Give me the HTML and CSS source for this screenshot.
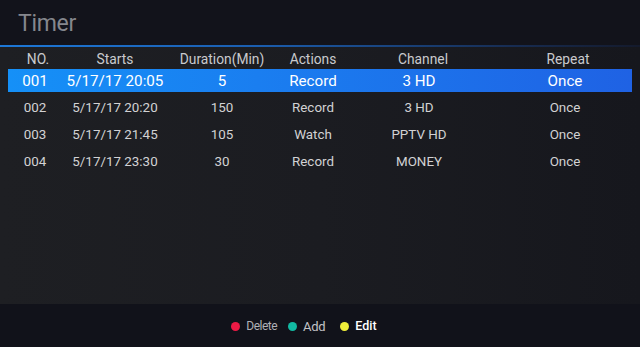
FILE: index.html
```html
<!DOCTYPE html>
<html>
<head>
<meta charset="utf-8">
<link rel="stylesheet" href="styles.css">
</head>
<body>
<div class="screen">
  <header class="top">
    <h1 class="title">Timer</h1>
  </header>
  <div class="rule"></div>
  <main class="panel">
    <div class="row head">
      <span class="c no">NO.</span>
      <span class="c st">Starts</span>
      <span class="c du">Duration(Min)</span>
      <span class="c ac">Actions</span>
      <span class="c ch">Channel</span>
      <span class="c re">Repeat</span>
    </div>
    <div class="row sel">
      <span class="c no">001</span>
      <span class="c st">5/17/17 20:05</span>
      <span class="c du">5</span>
      <span class="c ac">Record</span>
      <span class="c ch">3 HD</span>
      <span class="c re">Once</span>
    </div>
    <div class="row">
      <span class="c no">002</span>
      <span class="c st">5/17/17 20:20</span>
      <span class="c du">150</span>
      <span class="c ac">Record</span>
      <span class="c ch">3 HD</span>
      <span class="c re">Once</span>
    </div>
    <div class="row">
      <span class="c no">003</span>
      <span class="c st">5/17/17 21:45</span>
      <span class="c du">105</span>
      <span class="c ac">Watch</span>
      <span class="c ch">PPTV HD</span>
      <span class="c re">Once</span>
    </div>
    <div class="row">
      <span class="c no">004</span>
      <span class="c st">5/17/17 23:30</span>
      <span class="c du">30</span>
      <span class="c ac">Record</span>
      <span class="c ch">MONEY</span>
      <span class="c re">Once</span>
    </div>
  </main>
  <footer class="foot">
    <span class="key k1"><i class="dot red"></i><span class="lbl del">Delete</span></span>
    <span class="key k2"><i class="dot teal"></i><span class="lbl add">Add</span></span>
    <span class="key k3"><i class="dot yel"></i><span class="lbl edit">Edit</span></span>
  </footer>
</div>
</body>
</html>
```
FILE: styles.css
```css
* { box-sizing: border-box; margin: 0; padding: 0; }
html, body { width: 640px; height: 347px; overflow: hidden; background: #11121a; }
body { font-family: Roboto, "Noto Sans", sans-serif; }
.screen { width: 640px; height: 347px; display: flex; flex-direction: column; }
.top { height: 45px; background: #12131b; padding-left: 18px; display: flex; align-items: center; }
.title { font-weight: 400; font-size: 23px; color: #85878d; line-height: 1; margin-top: 2px; letter-spacing: -0.3px; }
.rule { height: 2px; background: linear-gradient(90deg, #1d78d8 0%, #1b5eb0 40%, #172c52 80%, #141a2c 100%); }
.panel { height: 257px; background: linear-gradient(90deg, #1e1f23 0%, #1b1c21 50%, #16171d 100%); padding: 2px 8px 0 8px; }
.row { display: grid; grid-template-columns: 54px 106px 108px 74px 148px 134px; height: 27px; align-items: center; color: #d2d2d4; font-size: 13.4px; }
.row.head { height: 19px; color: #c9cacd; font-size: 13.8px; }
.row.sel { height: 23px; margin: 1px 0 2px; background: linear-gradient(90deg, #1590f7 0%, #1a7ef0 40%, #1f62e4 100%); color: #ffffff; font-size: 15.2px; }
.c { text-align: center; white-space: nowrap; }
.head .no { padding-left: 6px; }
.head .re { padding-left: 6px; }
.ch { padding-right: 10px; }
.head .ch { padding-right: 2px; }
.foot { flex: 1; display: flex; align-items: center; justify-content: center; padding-right: 32px; padding-top: 1px; }
.key { display: flex; align-items: center; }
.k1 { margin-right: 11px; }
.k2 { margin-right: 15px; }
.dot { display: block; width: 9px; height: 9px; border-radius: 50%; margin-right: 6px; }
.red { background: #ec1a45; }
.teal { background: #12b9a2; }
.yel { background: #f0ef3a; }
.lbl { line-height: 1; }
.del { font-size: 12px; color: #b0b0b6; letter-spacing: -0.5px; }
.add { font-size: 13px; color: #c2c2c6; letter-spacing: -0.3px; }
.edit { font-size: 12.5px; color: #ffffff; font-weight: 500; }
```
